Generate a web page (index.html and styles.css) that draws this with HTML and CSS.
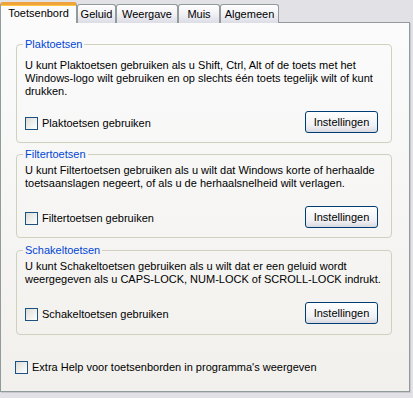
FILE: index.html
```html
<!DOCTYPE html>
<html lang="nl">
<head>
  <meta charset="UTF-8" />
  <title>Toegankelijkheidsopties</title>
  <link rel="stylesheet" href="styles.css">
</head>
<body>
  <div class="dialog">
    <div class="tabs">
      <div class="tab active t-keyboard">Toetsenbord</div>
      <div class="tab t-sound">Geluid</div>
      <div class="tab t-display">Weergave</div>
      <div class="tab t-mouse">Muis</div>
      <div class="tab t-general">Algemeen</div>
    </div>
    <div class="panel">
      <fieldset class="group first">
        <legend>Plaktoetsen</legend>
        <p>U kunt Plaktoetsen gebruiken als u Shift, Ctrl, Alt of de toets met het<br>Windows-logo wilt gebruiken en op slechts één toets tegelijk wilt of kunt<br>drukken.</p>
        <div class="row">
          <label class="check"><span class="box"></span>Plaktoetsen gebruiken</label>
          <button class="btn">Instellingen</button>
        </div>
      </fieldset>
      <fieldset class="group second">
        <legend>Filtertoetsen</legend>
        <p>U kunt Filtertoetsen gebruiken als u wilt dat Windows korte of herhaalde<br>toetsaanslagen negeert, of als u de herhaalsnelheid wilt verlagen.</p>
        <div class="row">
          <label class="check"><span class="box"></span>Filtertoetsen gebruiken</label>
          <button class="btn">Instellingen</button>
        </div>
      </fieldset>
      <fieldset class="group third">
        <legend>Schakeltoetsen</legend>
        <p>U kunt Schakeltoetsen gebruiken als u wilt dat er een geluid wordt<br>weergegeven als u CAPS-LOCK, NUM-LOCK of SCROLL-LOCK indrukt.</p>
        <div class="row">
          <label class="check"><span class="box"></span>Schakeltoetsen gebruiken</label>
          <button class="btn">Instellingen</button>
        </div>
      </fieldset>
      <label class="check extra"><span class="box"></span>Extra Help voor toetsenborden in programma's weergeven</label>
    </div>
  </div>
</body>
</html>
```

FILE: styles.css
```css
body {
  margin: 0;
  width: 413px;
  height: 398px;
  background: #e2e1e6;
  font-family: "Liberation Sans", Arial, sans-serif;
  font-size: 11px;
  line-height: 13px;
  color: #000;
  overflow: hidden;
}
.dialog {
  padding-top: 2px;
  width: 410px;
}
.tabs {
  display: flex;
  align-items: flex-end;
  height: 21px;
  margin-bottom: -1px;
  position: relative;
  z-index: 1;
}
.tab {
  box-sizing: border-box;
  height: 19px;
  line-height: 19px;
  text-align: center;
  border: 1px solid #919b9c;
  border-bottom: none;
  border-radius: 3px 3px 0 0;
  background: linear-gradient(#ffffff, #f1f1f5 50%, #dcdce6);
  white-space: nowrap;
}
.tab.active {
  height: 21px;
  line-height: 17px;
  border-top: 3px solid #f0a33c;
  background: #fbfbfc;
  box-shadow: inset 0 1px 0 #ffc73c;
}
.t-keyboard { width: 77px; }
.t-sound { width: 39px; }
.t-display { width: 62px; }
.t-mouse { width: 42px; }
.t-general { width: 59px; }
.panel {
  height: 368px;
  border: 1px solid #919b9c;
  background: linear-gradient(#fbfbfc, #f1f0ec);
  box-shadow: 1px 1px 0 #c9c8d0;
  padding: 0 17px 0 15px;
}
.group {
  margin: 0;
  min-width: 0;
  padding: 0 13px 9px 8px;
  border: 1px solid #d0d0bf;
  border-radius: 4px;
}
.group legend {
  color: #0046d5;
  padding: 0 2px;
  margin-left: -2px;
}
.group p {
  margin: 0;
  white-space: nowrap;
}
.first {
  margin-top: 15px;
  padding-top: 8px;
}
.second {
  margin-top: 5px;
  padding-top: 3px;
}
.third {
  margin-top: 6px;
  padding-top: 3px;
  padding-bottom: 10px;
}
.row {
  display: flex;
  justify-content: space-between;
  align-items: center;
  margin-top: 16px;
}
.first .row {
  margin-top: 13px;
}
.check {
  display: flex;
  align-items: center;
  gap: 4px;
  padding-top: 2px;
}
.box {
  width: 11px;
  height: 11px;
  border: 1px solid #1c5180;
  background: linear-gradient(135deg, #dcdcd7, #ffffff);
}
.btn {
  width: 73px;
  height: 22px;
  padding: 0;
  font: inherit;
  color: #000;
  border: 1px solid #003c74;
  border-radius: 3px;
  background: linear-gradient(#ffffff, #f0f0f3 70%, #d8d8e0);
}
.extra {
  margin: 24px 0 0 -1px;
}
```
